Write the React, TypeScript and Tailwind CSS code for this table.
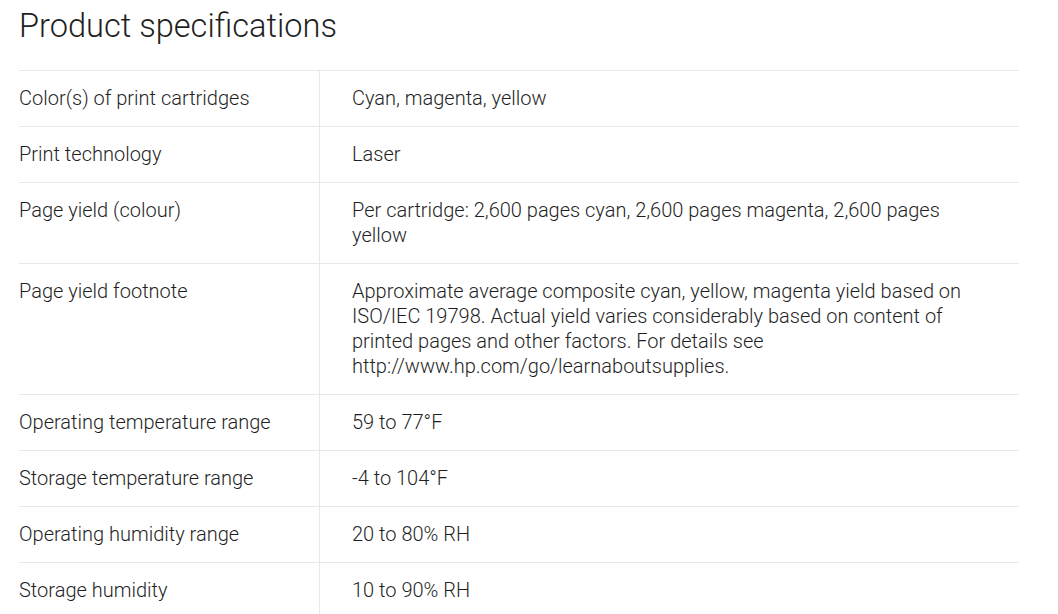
import React from 'react';

type Spec = {
  label: string;
  value: React.ReactNode;
};

const specs: Spec[] = [
  { label: 'Color(s) of print cartridges', value: 'Cyan, magenta, yellow' },
  { label: 'Print technology', value: 'Laser' },
  { label: 'Page yield (colour)', value: 'Per cartridge: 2,600 pages cyan, 2,600 pages magenta, 2,600 pages yellow' },
  {
    label: 'Page yield footnote',
    value:
      'Approximate average composite cyan, yellow, magenta yield based on ISO/IEC 19798. Actual yield varies considerably based on content of printed pages and other factors. For details see http://www.hp.com/go/learnaboutsupplies.',
  },
  { label: 'Operating temperature range', value: '59 to 77°F' },
  { label: 'Storage temperature range', value: '-4 to 104°F' },
  { label: 'Operating humidity range', value: '20 to 80% RH' },
  { label: 'Storage humidity', value: '10 to 90% RH' },
];

const App: React.FC = () => {
  return (
    <div className="min-h-screen bg-white px-[19px] text-[#1f1f1f]" style={{ fontFamily: 'Roboto, "Noto Sans", sans-serif' }}>
      <h2 className="h-[70px] pt-[4px] text-[32.6px] font-light leading-[44px]">Product specifications</h2>
      <div className="w-[1000px] border-t border-[#e8e8e8]">
        {specs.map((spec, index) => (
          <div key={index} className="flex border-b border-[#e8e8e8] text-[20px] font-light leading-[25px]">
            <div className="w-[301px] shrink-0 border-r border-[#e8e8e8] py-[15px]">{spec.label}</div>
            <div className="flex-1 py-[15px] pl-[32px] pr-[33px]">{spec.value}</div>
          </div>
        ))}
      </div>
    </div>
  );
};

export default App;
